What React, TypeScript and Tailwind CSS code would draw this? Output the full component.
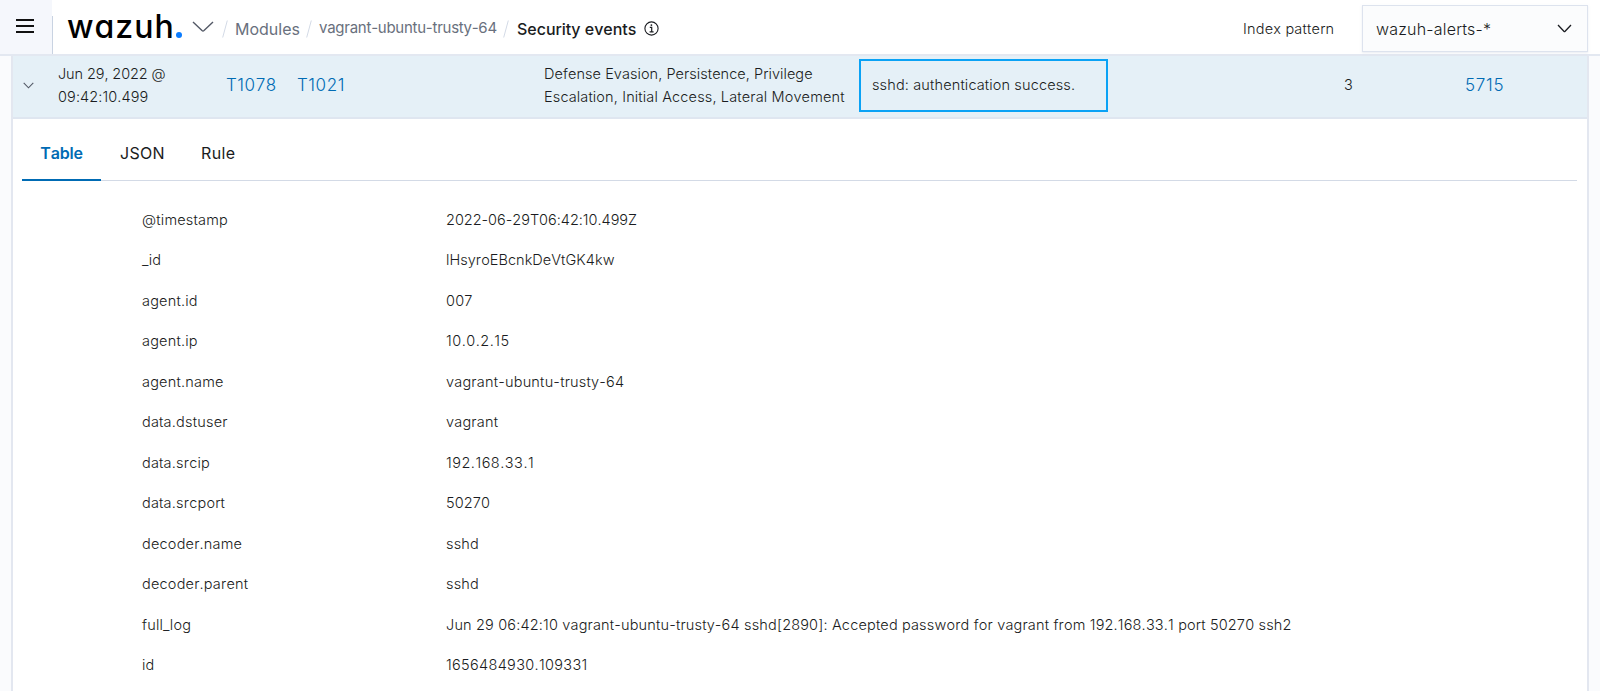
import React from "react";

const fields: [string, string, string?][] = [
  ["@timestamp", "2022-06-29T06:42:10.499Z", "tracking-[-0.02px]"],
  ["_id", "lHsyroEBcnkDeVtGK4kw", "tracking-[0.05px]"],
  ["agent.id", "007"],
  ["agent.ip", "10.0.2.15", "tracking-[0.5px]"],
  ["agent.name", "vagrant-ubuntu-trusty-64"],
  ["data.dstuser", "vagrant"],
  ["data.srcip", "192.168.33.1", "tracking-[0.5px]"],
  ["data.srcport", "50270", "tracking-[0.1px]"],
  ["decoder.name", "sshd"],
  ["decoder.parent", "sshd"],
  ["full_log", "Jun 29 06:42:10 vagrant-ubuntu-trusty-64 sshd[2890]: Accepted password for vagrant from 192.168.33.1 port 50270 ssh2", "tracking-[0.165px]"],
  ["id", "1656484930.109331", "tracking-[0.32px]"],
];

function Slash() {
  return (
    <svg className="h-[18px] w-[6px] shrink-0" viewBox="0 0 6 18" fill="none">
      <path d="M5.3 0.5 0.7 17.5" stroke="#d3dae6" />
    </svg>
  );
}

function Header() {
  return (
    <header className="flex h-14 shrink-0 border-b-2 border-[#e3e8f1] bg-white">
      <div className="flex w-[52px] shrink-0 flex-col bg-[#f5f7fc]">
        <button className="flex h-[52px] items-center pl-4" aria-label="Menu">
          <svg className="h-4 w-[18px]" viewBox="0 0 18 16" fill="none">
            <path d="M0 2h18M0 8h18M0 14h18" stroke="#111" strokeWidth="2" />
          </svg>
        </button>
      </div>
      <div className="mt-4 w-px bg-[#c9d3e2]" />
      <div className="flex flex-1 items-center">
        <div className="flex w-[130px] shrink-0 items-baseline pl-[14px] text-[32px] leading-none font-medium text-black">
          <span className="w-[106px] tracking-[1px] whitespace-nowrap [font-feature-settings:'cv11']">wazuh</span>
          <span className="ml-[3px] size-[6px] shrink-0 rounded-full bg-[#0a7cff]" />
        </div>
        <svg className="ml-[9px] h-3 w-[22px] shrink-0" viewBox="0 0 22 12" fill="none">
          <path d="M1 1 10 9.6Q11 10.5 12 9.6L21 1" stroke="#535966" strokeWidth="1.4" />
        </svg>
        <nav className="ml-[8px] flex items-center pt-[3px] text-base text-[#69707d]">
          <Slash />
          <span className="ml-[7px] w-[66px] shrink-0 whitespace-nowrap">Modules</span>
          <span className="ml-[5px] flex"><Slash /></span>
          <span className="ml-[7px] w-[178px] shrink-0 text-[15px] tracking-[-0.25px] whitespace-nowrap">vagrant-ubuntu-trusty-64</span>
          <span className="ml-[6px] flex"><Slash /></span>
          <span className="ml-[8px] w-[120px] shrink-0 font-medium whitespace-nowrap text-[#1a1c21]">Security events</span>
          <svg className="ml-[7px] size-[15px] shrink-0" viewBox="0 0 15 15" fill="none">
            <circle cx="7.5" cy="7.5" r="6.6" stroke="#1a1c21" strokeWidth="1.1" />
            <path d="M5.8 6.4h1.9v4.2M5.6 10.8h4" stroke="#1a1c21" strokeWidth="1.2" />
            <circle cx="7.4" cy="4.1" r="0.9" fill="#1a1c21" />
          </svg>
        </nav>
        <div className="mt-[3px] ml-auto w-[92px] text-[14.5px] font-light tracking-[0.2px] whitespace-nowrap text-[#1a1c21]">Index pattern</div>
        <div className="mt-[3px] mr-3 ml-[27px] flex h-[47px] w-[226px] items-center justify-between border border-[#dde3ee] bg-[#fbfcfd] pr-[15px] pl-[13px] text-base font-light shadow-[0_1px_2px_#d3dae680]">
          <span className="tracking-[0.2px] text-[#1a1c21]">wazuh-alerts-*</span>
          <svg className="h-[9px] w-[15px]" viewBox="0 0 15 9" fill="none">
            <path d="M1 1 6.9 7.3Q7.5 7.9 8.1 7.3L14 1" stroke="#1a1c21" strokeWidth="1.3" />
          </svg>
        </div>
      </div>
    </header>
  );
}

function EventRow() {
  return (
    <div className="flex h-[63px] shrink-0 items-center border-b-2 border-[#dfe6f0] bg-[#e5f0f7] pb-[2px] text-[14.5px] leading-[22.6px] font-light tracking-[0.14px] text-[#1a1c21]">
      <svg className="ml-[10px] h-[7px] w-[11px] shrink-0" viewBox="0 0 11 7" fill="none">
        <path d="M0.7 0.8 5.5 5.8 10.3 0.8" stroke="#535966" strokeWidth="1.1" />
      </svg>
      <div className="ml-[24px] w-[168px] shrink-0 pt-px tracking-[-0.1px] whitespace-nowrap">
        Jun 29, 2022 @<br /><span className="tracking-[0.1px]">09:42:10.499</span>
      </div>
      <div className="flex w-[318px] shrink-0 text-[17px] tracking-[0.55px] text-[#006bb4]">
        <a className="w-[71px]">T1078</a>
        <a>T1021</a>
      </div>
      <div className="w-[315px] shrink-0 pt-px whitespace-nowrap">
        <span className="tracking-[0.05px]">Defense Evasion, Persistence, Privilege</span><br />Escalation, Initial Access, Lateral Movement
      </div>
      <div className="flex h-[53px] w-[249px] shrink-0 items-center border-2 border-[#0aa2f5] pl-[11px] whitespace-nowrap">
        sshd: authentication success.
      </div>
      <div className="ml-[236px] w-[121px] shrink-0">3</div>
      <a className="text-[17px] tracking-[0.7px] text-[#006bb4]">5715</a>
    </div>
  );
}

export default function App() {
  return (
    <div className="flex h-[691px] w-[1600px] flex-col overflow-hidden bg-[#fafbfd] font-[Inter,sans-serif] [font-kerning:none]">
      <Header />
      <main className="mr-[11px] ml-[11px] flex flex-1 flex-col border-x-2 border-[#e3e7f0] bg-white">
        <EventRow />
        <div className="mr-[10px] ml-[9px] flex h-[62px] shrink-0 border-b border-[#d3dae6] text-base text-[#1a1c21]">
          <div className="-mb-px flex w-[79px] items-center justify-center border-b-2 border-[#006bb4] pt-[8px] font-semibold tracking-[-0.2px] text-[#006bb4]">Table</div>
          <div className="ml-[19px] flex w-[81px] items-center pt-[7px] tracking-[0.3px]">JSON</div>
          <div className="flex items-center pt-[7px] tracking-[0.4px]">Rule</div>
        </div>
        <dl className="mt-[18.4px] flex flex-col text-[14.5px] font-light tracking-[0.2px] text-[#1a1c21]">
          {fields.map(([name, value, spacing]) => (
            <div key={name} className="flex h-[40.5px] shrink-0 items-center pl-[129px]">
              <dt className="w-[304px] shrink-0">{name}</dt>
              <dd className={`whitespace-nowrap ${spacing ?? ""}`}>{value}</dd>
            </div>
          ))}
        </dl>
      </main>
    </div>
  );
}
